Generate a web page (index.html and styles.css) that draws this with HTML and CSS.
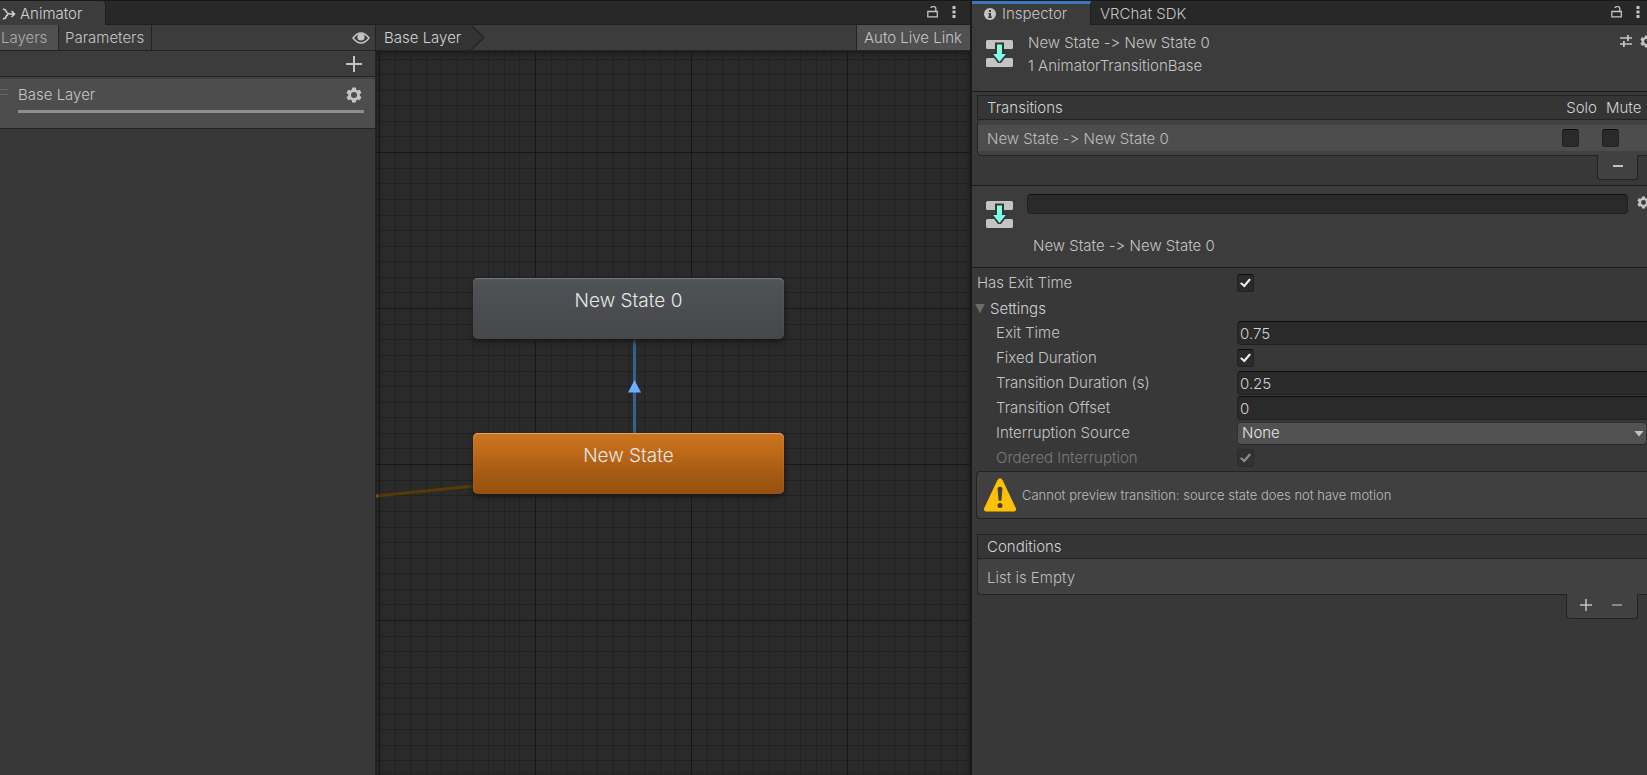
FILE: index.html
```html
<!DOCTYPE html>
<html lang="en">
<head>
<meta charset="utf-8">
<meta name="viewport" content="width=device-width, initial-scale=1">
<title>Animator</title>
<link rel="stylesheet" href="styles.css">
</head>
<body>
<svg class="defs" width="0" height="0" aria-hidden="true">
  <symbol id="gear" viewBox="0 0 16 16">
    <path fill="currentColor" fill-rule="evenodd" d="M6.2 0.5h3.6l.5 2.2 1.2.7 2.2-.7 1.8 3.1-1.7 1.5v1.4l1.7 1.5-1.8 3.1-2.2-.7-1.2.7-.5 2.2H6.200l-.5-2.200-1.200-.7-2.200.7-1.800-3.100 1.700-1.500V7.300L.5 5.800l1.800-3.100 2.200.7 1.200-.7zM8 5a3 3 0 1 0 0 6 3 3 0 0 0 0-6z"/>
  </symbol>
  <symbol id="lock" viewBox="0 0 12 14">
    <path fill="none" stroke="currentColor" stroke-width="1.3" d="M1.500 6.500h8.800v5.300H.8V6.500zM8.800 6.500V3.500Q8.800 1.700 7 1.700H5.500Q4 1.700 4 3"/>
  </symbol>
  <symbol id="dots" viewBox="0 0 4 14">
    <path fill="currentColor" d="M.5 1h3v3h-3zM.5 5.500h3v3h-3zM.5 10h3v3h-3z"/>
  </symbol>
  <symbol id="transition" viewBox="0 0 28 28">
    <path fill="#c4c4c4" d="M2.500 1h24q1.500 0 1.500 1.500v6q0 1.500-1.500 1.500h-24Q1 10 1 8.500v-6Q1 1 2.500 1zM2.500 19h24q1.500 0 1.500 1.500v6q0 1.500-1.500 1.500h-24Q1 28 1 26.500v-6Q1 19 2.500 19z"/>
    <path fill="#353535" d="M10 3.500h9V13h3.500v2.500L16 24h-3l-6.500-8.500V13H10z"/>
    <path fill="#80ffe6" d="M12 5.500h5v9.500h3.800L14.500 23 8.200 15H12z"/>
  </symbol>
  <symbol id="plus" viewBox="0 0 16 16">
    <path fill="currentColor" d="M7 0h2v7h7v2H9v7H7V9H0V7h7z"/>
  </symbol>
  <symbol id="minus" viewBox="0 0 10 2"><path fill="currentColor" d="M0 0h10v2H0z"/></symbol>
</svg>

<div class="workspace">
  <section class="window animator" aria-label="Animator">
    <header class="tabs">
      <button class="tab tab-animator active" type="button">
        <svg class="icon-tab" viewBox="0 0 14 14" aria-hidden="true"><path fill="none" stroke="currentColor" stroke-width="1.500" d="M1 2l2.500 1Q5 7 8 7h4M1 12l2.500-1Q4 8.500 6 7.500M9.500 4l3 3-3 3"/></svg>
        Animator
      </button>
      <div class="tab-actions">
        <button class="icon-button" type="button" aria-label="Lock"><svg class="icon-lock"><use href="#lock"/></svg></button>
        <button class="icon-button" type="button" aria-label="Menu"><svg class="icon-dots"><use href="#dots"/></svg></button>
      </div>
    </header>
    <div class="animator-body">
      <aside class="layers">
        <div class="toolbar">
          <button class="tool selected layers-tool" type="button">Layers</button>
          <button class="tool" type="button">Parameters</button>
          <button class="icon-button eye" type="button" aria-label="Toggle visibility">
            <svg width="18" height="12" viewBox="0 0 18 12"><path fill="none" stroke="currentColor" stroke-width="1.500" d="M1 6Q9-4 17 6 9 16 1 6z"/><circle cx="9" cy="5" r="3.600" fill="currentColor"/></svg>
          </button>
        </div>
        <div class="add-bar">
          <button class="icon-button" type="button" aria-label="Add layer"><svg class="icon-add"><use href="#plus"/></svg></button>
        </div>
        <div class="layer">
          <span class="grip"></span>
          <div class="layer-main">
            <div class="layer-title">
              <span>Base Layer</span>
              <button class="icon-button" type="button" aria-label="Layer settings"><svg class="icon-gear"><use href="#gear"/></svg></button>
            </div>
            <div class="weight"></div>
          </div>
        </div>
      </aside>
      <div class="graph">
        <div class="toolbar">
          <a class="crumb" href="#base">Base Layer</a>
          <svg class="crumb-tip" viewBox="0 0 14 25" aria-hidden="true"><path fill="#333" d="M0 0l13 12.500L0 25z"/><path fill="none" stroke="#232323" stroke-width="1.300" d="M0 0l13 12.500L0 25"/></svg>
          <button class="tool selected live-link" type="button">Auto Live Link</button>
        </div>
        <div class="canvas">
          <svg class="grid" aria-hidden="true">
            <defs>
              <pattern id="cells" x="3" y="101" width="156" height="156" patternUnits="userSpaceOnUse">
                <path fill="none" stroke="#212121" d="M16.500 0v156M31.500 0v156M47.500 0v156M62.500 0v156M78.500 0v156M94.500 0v156M109.500 0v156M125.500 0v156M140.500 0v156M0 16.500h156M0 31.500h156M0 47.500h156M0 63.500h156M0 78.500h156M0 94.500h156M0 109.500h156M0 125.500h156M0 140.500h156"/>
                <path fill="none" stroke="#171717" d="M.5 0v156M0 .5h156"/>
              </pattern>
            </defs>
            <rect width="100%" height="100%" fill="url(#cells)"/>
            <path stroke="#573a05" stroke-width="3" d="M0 445l98-10"/>
            <path stroke="#b47a10" stroke-width="3" d="M0 445h2"/>
            <path stroke="#38608c" stroke-width="3" d="M258.500 288v96"/>
            <path fill="#69aeff" d="M258.500 329l6.500 12.500h-13z"/>
          </svg>
          <div class="node node-grey">New State 0</div>
          <div class="node node-orange">New State</div>
        </div>
      </div>
    </div>
  </section>

  <section class="window inspector" aria-label="Inspector">
    <header class="tabs">
      <button class="tab tab-inspector active" type="button">
        <svg class="icon-info" viewBox="0 0 12 12" aria-hidden="true"><circle cx="6" cy="6" r="6" fill="currentColor"/><path fill="#3c3c3c" d="M5 2h2v2H5zM4.500 5H7v3.500h.8V10H4.200V8.500H5v-2h-.5z"/></svg>
        Inspector
      </button>
      <button class="tab" type="button">VRChat SDK</button>
      <div class="tab-actions">
        <button class="icon-button" type="button" aria-label="Lock"><svg class="icon-lock"><use href="#lock"/></svg></button>
        <button class="icon-button" type="button" aria-label="Menu"><svg class="icon-dots"><use href="#dots"/></svg></button>
      </div>
    </header>

    <div class="object-header">
      <svg class="icon-transition"><use href="#transition"/></svg>
      <div class="object-name"><div>New State -&gt; New State 0</div><div>1 AnimatorTransitionBase</div></div>
      <div class="object-actions">
        <button class="icon-button" type="button" aria-label="Presets"><svg width="12" height="12" viewBox="0 0 12 12"><path fill="currentColor" d="M0 2.300h7V0h1.800v2.300H12v1.400H8.800V6H7V3.700H0zM0 8.300h3V6h1.800v2.300H12v1.400H4.800V12H3V9.700H0z"/></svg></button>
        <button class="icon-button" type="button" aria-label="Settings"><svg class="icon-gear-small"><use href="#gear"/></svg></button>
      </div>
    </div>

    <div class="list transitions">
      <div class="list-head"><span class="grow">Transitions</span><span>Solo</span><span class="mute">Mute</span></div>
      <div class="list-body">
        <div class="list-row">
          <span class="grow">New State -&gt; New State 0</span>
          <input class="check" type="checkbox" aria-label="Solo">
          <input class="check" type="checkbox" aria-label="Mute">
        </div>
      </div>
      <div class="list-foot">
        <button class="icon-button" type="button" aria-label="Remove transition"><svg class="icon-minus"><use href="#minus"/></svg></button>
      </div>
    </div>

    <div class="name-section">
      <svg class="icon-transition"><use href="#transition"/></svg>
      <div class="name-fields">
        <input class="field name-input" type="text" aria-label="Transition name">
        <div class="name-text">New State -&gt; New State 0</div>
      </div>
      <button class="icon-button name-gear" type="button" aria-label="Settings"><svg class="icon-gear-small"><use href="#gear"/></svg></button>
    </div>

    <div class="properties">
      <div class="property top"><label for="has-exit">Has Exit Time</label><input class="check" id="has-exit" type="checkbox" checked></div>
      <button class="foldout" type="button"><span class="arrow"></span>Settings</button>
      <div class="property"><label for="exit-time">Exit Time</label><input class="field" id="exit-time" type="text" value="0.75"></div>
      <div class="property"><label for="fixed">Fixed Duration</label><input class="check" id="fixed" type="checkbox" checked></div>
      <div class="property"><label for="duration">Transition Duration (s)</label><input class="field" id="duration" type="text" value="0.25"></div>
      <div class="property"><label for="offset">Transition Offset</label><input class="field" id="offset" type="text" value="0"></div>
      <div class="property"><label for="source">Interruption Source</label><div class="select-wrap"><select id="source"><option>None</option></select></div></div>
      <div class="property disabled"><label for="ordered">Ordered Interruption</label><input class="check" id="ordered" type="checkbox" checked disabled></div>
    </div>

    <div class="help">
      <svg class="icon-warn" viewBox="0 0 34 34" aria-hidden="true"><path fill="#ffc107" d="M14.500 2q2.500-3.500 5 0L33 30.500q.8 2.500-2 3H3q-2.800-.5-2-3z"/><path fill="#404040" d="M14.500 10q2.500-3 5 0l-1 12q-1.500 2-3 0z"/><circle cx="17" cy="27.500" r="2.500" fill="#404040"/></svg>
      <span>Cannot preview transition: source state does not have motion</span>
    </div>

    <div class="list conditions">
      <div class="list-head"><span>Conditions</span></div>
      <div class="list-body"><div class="empty">List is Empty</div></div>
      <div class="list-foot wide">
        <button class="icon-button" type="button" aria-label="Add condition"><svg class="icon-plus"><use href="#plus"/></svg></button>
        <button class="icon-button dim" type="button" aria-label="Remove condition"><svg class="icon-minus"><use href="#minus"/></svg></button>
      </div>
    </div>
  </section>
</div>
</body>
</html>
```
FILE: styles.css
```css
* { box-sizing: border-box; }

body {
  margin: 0;
  background: #191919;
  color: #c4c4c4;
  font: 350 15px/20px Inter, "Liberation Sans", sans-serif;
  font-variant-ligatures: none;
  font-feature-settings: "calt" 0;
}

button, input, select { font: inherit; color: inherit; }
button { padding: 0; border: 0; background: none; white-space: nowrap; }
svg { display: block; flex: none; }
.defs { position: absolute; }
.grow { flex: 1; }

.workspace {
  display: grid;
  grid-template-columns: minmax(0, 1fr) 675px;
  column-gap: 2px;
  min-height: 100vh;
  padding-top: 1px;
  overflow: hidden;
}
.window { display: flex; flex-direction: column; min-width: 0; }

/* Tab strips */
.tabs {
  display: flex;
  height: 24px;
  background: #282828;
  border-bottom: 1px solid #1f1f1f;
}
.tab { display: flex; align-items: center; gap: 5px; height: 24px; padding: 1px 9px 0; color: #c4c4c4; }
.tab.active { background: #3c3c3c; color: #d2d2d2; }
.tab-animator { width: 106px; padding: 1px 0 0 2px; gap: 4px; border-right: 1px solid #1f1f1f; border-radius: 0 3px 0 0; }
.tab-inspector { width: 119px; padding: 0 0 2px 12px; gap: 6px; border-top: 3px solid #3a79bb; border-right: 1px solid #1f1f1f; }
.tab-inspector.active { color: #c4c4c4; }
.tab-actions { display: flex; align-items: center; gap: 13px; margin-left: auto; padding: 0 14px 1px 0; }
.inspector .tab-actions { padding-right: 7px; }
.icon-button { display: flex; align-items: center; justify-content: center; color: #c4c4c4; }
.icon-tab { width: 14px; height: 14px; }
.icon-info { width: 12px; height: 12px; }
.icon-lock { width: 12px; height: 14px; }
.icon-dots { width: 4px; height: 14px; }
.icon-gear, .icon-add { width: 16px; height: 16px; }
.icon-gear-small { width: 13px; height: 13px; }
.icon-plus { width: 12px; height: 12px; }
.icon-minus { width: 10px; height: 2px; }
.icon-transition { width: 28px; height: 28px; }

/* Animator */
.animator-body { display: grid; grid-template-columns: 376px minmax(0, 1fr); flex: 1; }
.layers { background: #383838; border-right: 1px solid #232323; }
.toolbar { display: flex; height: 26px; background: #3c3c3c; border-bottom: 1px solid #232323; }
.tool { padding: 0 7px 0 6px; border-right: 1px solid #232323; }
.tool.selected { background: #505050; }
.layers-tool { width: 59px; padding: 0 0 0 1px; text-align: left; color: #adadad; }
.eye { margin: 0 5px 0 auto; }
.add-bar { display: flex; align-items: center; justify-content: flex-end; height: 26px; padding-right: 13px; background: #3c3c3c; border-bottom: 1px solid #232323; }
.layer { display: flex; height: 52px; background: #4d4d4d; border-top: 2px solid #414141; border-bottom: 1px solid #232323; }
.grip { width: 8px; height: 6px; margin-top: 10px; border-top: 1px solid #666; border-bottom: 1px solid #666; }
.layer-main { flex: 1; padding: 6px 11px 0 10px; }
.layer-title { display: flex; align-items: center; justify-content: space-between; height: 20px; padding-right: 2px; }
.weight { height: 3px; margin-top: 5px; background: #8e8e8e; }

.graph { display: flex; flex-direction: column; min-width: 0; }
.crumb { display: flex; align-items: center; padding: 0 10px 0 8px; background: #333; color: #d2d2d2; text-decoration: none; }
.crumb-tip { width: 14px; height: 25px; }
.live-link { margin-left: auto; padding: 0 8px 0 7px; border-left: 1px solid #232323; border-right: 0; }
.canvas {
  position: relative;
  flex: 1;
  background: #2a2a2a;
  overflow: hidden;
}
.canvas::after { content: ""; position: absolute; inset: 0; box-shadow: inset 0 2px 6px #191919; pointer-events: none; }
.grid { position: absolute; inset: 0; width: 100%; height: 100%; }
.node {
  position: absolute;
  left: 97px;
  width: 311px;
  height: 61px;
  padding-top: 11px;
  border-radius: 5px;
  color: #e6e6e6;
  font-size: 19px;
  line-height: 24px;
  text-align: center;
}
.node-grey { top: 227px; background: linear-gradient(#505457, #4a4b4e 60%, #464749); box-shadow: inset 0 1px 1px #7b7d80, 0 3px 5px #191919; }
.node-orange { top: 382px; background: linear-gradient(#cc7420, #c16c1b 25%, #a75b12 65%, #95500f); box-shadow: inset 0 1px 1px #e8a468, 0 3px 5px #191919; }

/* Inspector */
.inspector { background: #383838; overflow: hidden; }
.object-header { display: flex; height: 67px; padding: 6px 0 0 13px; background: #3c3c3c; border-bottom: 1px solid #1a1a1a; }
.object-header .icon-transition { margin-top: 8px; }
.object-name { flex: 1; padding-left: 15px; line-height: 23px; }
.object-actions { display: flex; align-items: flex-start; gap: 8px; margin-right: -6px; padding-top: 4px; }

.list { margin-left: 5px; }
.transitions { margin-top: 3px; }
.list-head { display: flex; align-items: center; gap: 9px; height: 25px; padding: 0 0 0 9px; background: #353535; border: 1px solid #232323; border-right: 0; color: #d2d2d2; }
.mute { width: 41px; }
.list-body { height: 36px; padding: 5px 0; background: #414141; border: 1px solid #232323; border-width: 0 0 1px 1px; border-radius: 4px 0 0 4px; }
.list-row { display: flex; align-items: center; gap: 23px; height: 26px; padding: 0 28px 0 9px; background: #4d4d4d; color: #bdbdbd; }
.list-row .grow { padding-top: 2px; }
.list-foot { display: flex; align-items: center; justify-content: center; width: 41px; height: 25px; margin: -1px 9px 0 auto; padding-bottom: 2px; background: #414141; border: 1px solid #232323; border-top: 0; border-radius: 0 0 3px 4px; }
.list-foot.wide { justify-content: flex-start; gap: 20px; width: 72px; padding-left: 13px; }
.empty { padding: 4px 9px; color: #bdbdbd; }
.dim { color: #888; }

.name-section { display: flex; height: 83px; margin-top: 5px; padding: 8px 0 0 13px; background: #3c3c3c; border-top: 1px solid #1a1a1a; border-bottom: 1px solid #1a1a1a; }
.name-section .icon-transition { margin-top: 6px; }
.name-fields { flex: 1; padding-left: 14px; }
.name-gear { align-self: flex-start; margin: 2px -3px 0 9px; }
.name-text { padding: 22px 6px 0; }
.field { display: block; width: 100%; height: 24px; padding: 1px 2px 0; background: #2a2a2a; border: 1px solid #212121; border-top-color: #0d0d0d; border-radius: 4px; color: #d2d2d2; outline: 0; }
.name-input { height: 20px; }

.properties { padding-top: 3px; }
.property { display: grid; grid-template-columns: 248px minmax(0, 1fr); align-items: center; height: 25px; padding-left: 17px; margin-right: -6px; padding-bottom: 1px; }
.property label { padding: 0 0 1px 7px; }
.property.top { padding-left: 5px; grid-template-columns: 260px minmax(0, 1fr); }
.property.top label { padding-left: 0; }
.foldout { display: flex; align-items: center; gap: 5px; height: 25px; padding-left: 3px; color: #d2d2d2; }
.arrow { width: 10px; height: 10px; background: #6b6b6b; clip-path: polygon(0 0, 100% 0, 50% 100%); }
.check { appearance: none; position: relative; flex: none; width: 17px; height: 18px; margin: 0; background: #2a2a2a; border: 1px solid #212121; border-top-color: #0d0d0d; border-radius: 3px; }
.check:checked::after { content: ""; position: absolute; inset: 3px 2px; background: #ececec; clip-path: polygon(0 55%, 15% 42%, 37% 64%, 83% 5%, 100% 18%, 40% 94%); }
.disabled label { color: #7a7a7a; }
.disabled .check { background: #323232; border-color: #2b2b2b; }
.disabled .check::after { background: #909090; }
.select-wrap { position: relative; padding-right: 6px; }
.select-wrap::after { content: ""; position: absolute; right: 9px; top: 9px; width: 10px; height: 6px; background: #c4c4c4; clip-path: polygon(0 0, 100% 0, 50% 100%); pointer-events: none; }
select { appearance: none; display: block; width: 100%; height: 23px; padding: 0 4px 2px; background: #515151; border: 1px solid #303030; border-bottom-color: #242424; border-radius: 4px; color: #e4e4e4; outline: 0; }

.help { display: flex; align-items: center; gap: 5px; height: 48px; margin: 0 0 15px 4px; padding-left: 6px; background: #404040; border: 1px solid #232323; border-right: 0; border-radius: 4px 0 0 4px; color: #bdbdbd; font-size: 13px; }
.icon-warn { width: 34px; height: 34px; }
```
